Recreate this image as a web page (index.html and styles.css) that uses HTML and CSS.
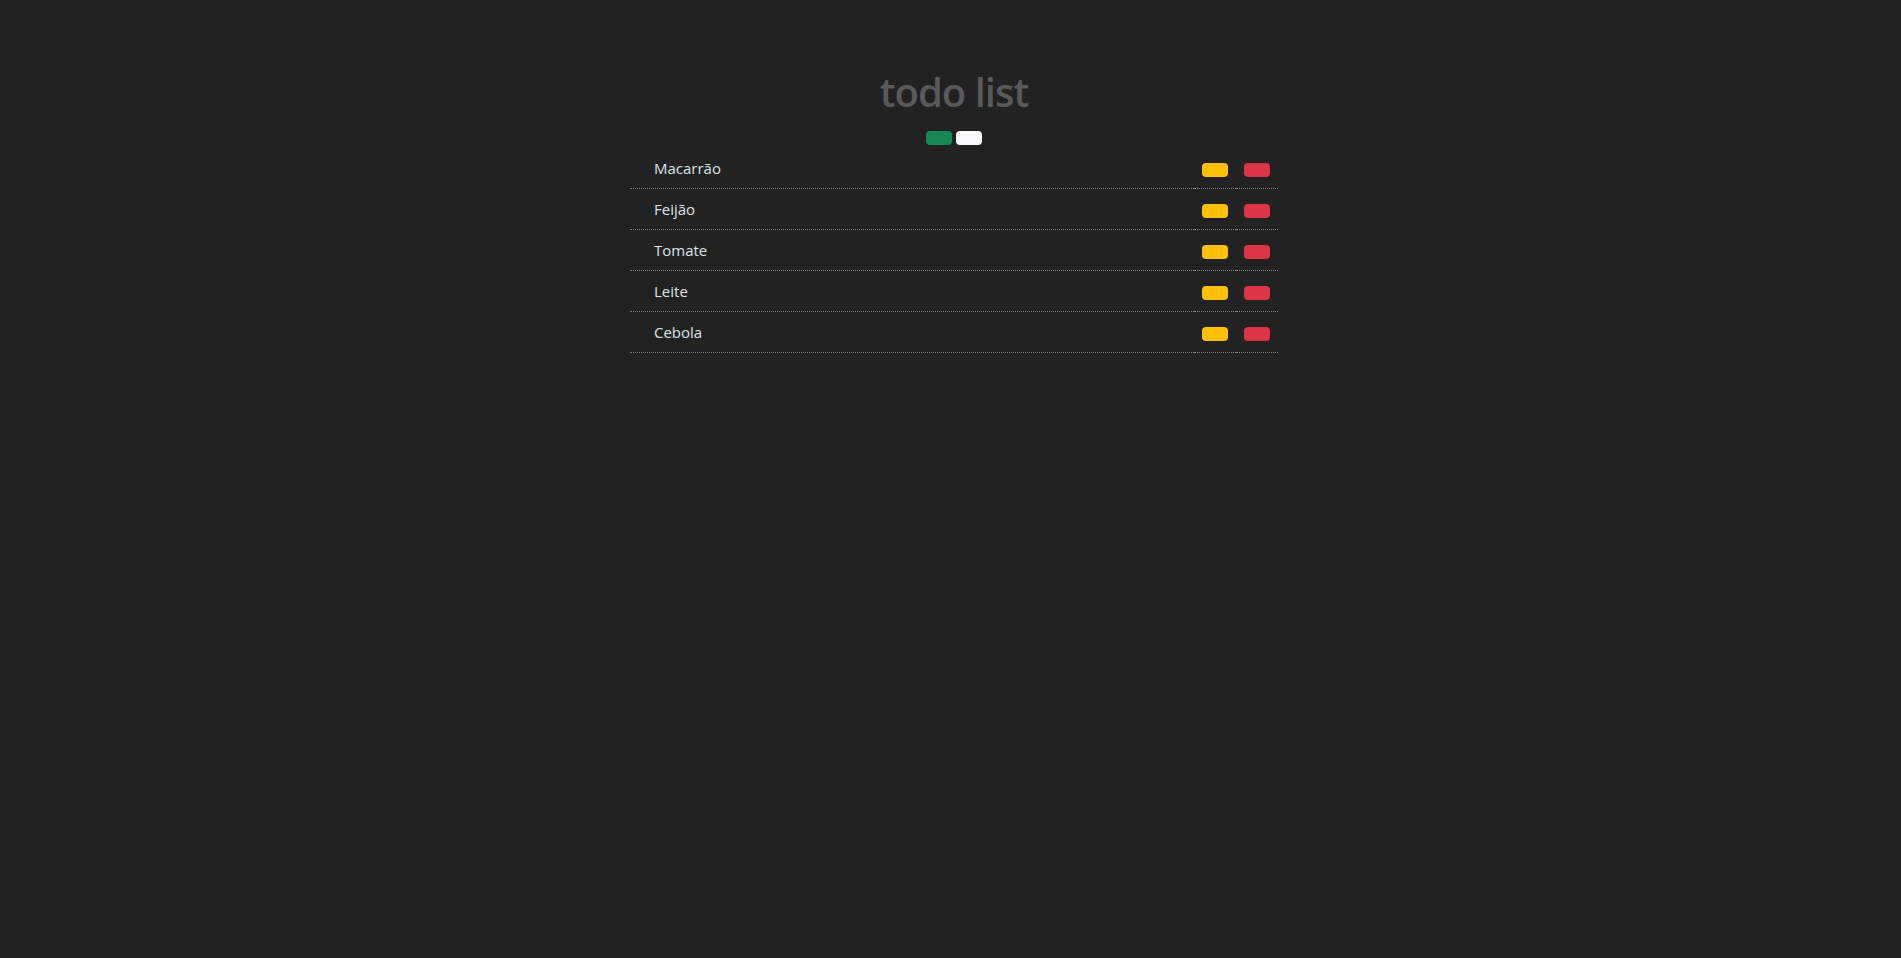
FILE: index.html
```html
<!DOCTYPE html>
<html lang="pt-BR">
<head>
<meta charset="utf-8">
<title>todo list</title>
<link rel="stylesheet" href="styles.css">
</head>
<body>
<div class="wrap">
  <header class="header">
    <h1 class="title">todo list</h1>
    <div class="actions">
      <button class="btn btn-green" type="button"></button><button class="btn btn-white" type="button"></button>
    </div>
  </header>
  <table class="list">
    <tbody>
      <tr><td class="name">Macarrão</td><td class="cell"><button class="btn btn-yellow" type="button"></button></td><td class="cell"><button class="btn btn-red" type="button"></button></td></tr>
      <tr><td class="name">Feijão</td><td class="cell"><button class="btn btn-yellow" type="button"></button></td><td class="cell"><button class="btn btn-red" type="button"></button></td></tr>
      <tr><td class="name">Tomate</td><td class="cell"><button class="btn btn-yellow" type="button"></button></td><td class="cell"><button class="btn btn-red" type="button"></button></td></tr>
      <tr><td class="name">Leite</td><td class="cell"><button class="btn btn-yellow" type="button"></button></td><td class="cell"><button class="btn btn-red" type="button"></button></td></tr>
      <tr><td class="name">Cebola</td><td class="cell"><button class="btn btn-yellow" type="button"></button></td><td class="cell"><button class="btn btn-red" type="button"></button></td></tr>
    </tbody>
  </table>
</div>
</body>
</html>
```

FILE: styles.css
```css
html, body {
  margin: 0;
  padding: 0;
  background: #222222;
  height: 100%;
}
body {
  font-family: "Open Sans", "Noto Sans", sans-serif;
  color: #dee2e6;
}
.wrap {
  width: 648px;
  margin-left: 630px;
  padding-top: 68px;
}
.header {
  display: flex;
  flex-direction: column;
  align-items: center;
  padding-bottom: 3px;
}
.title {
  margin: 0;
  font-size: 40px;
  line-height: 48px;
  font-weight: 600;
  color: #595959;
  letter-spacing: -1px;
}
.actions {
  display: flex;
  gap: 4px;
  margin-top: 15px;
}
.btn {
  display: block;
  border: 0;
  padding: 0;
  width: 26px;
  height: 14px;
  border-radius: 4px;
  cursor: pointer;
}
.btn-green { background: #198754; }
.btn-white { background: #f8f9fa; }
.btn-yellow { background: #ffc107; }
.btn-red { background: #dc3545; }
.list {
  width: 648px;
  border-collapse: collapse;
}
.list td {
  height: 40px;
  padding: 0 8px;
  border-bottom: 1px dotted #808080;
  vertical-align: middle;
}
.list .name {
  padding-left: 24px;
  font-size: 15px;
}
.list .cell {
  width: 26px;
}
.cell .btn {
  margin-top: 3px;
}
```
